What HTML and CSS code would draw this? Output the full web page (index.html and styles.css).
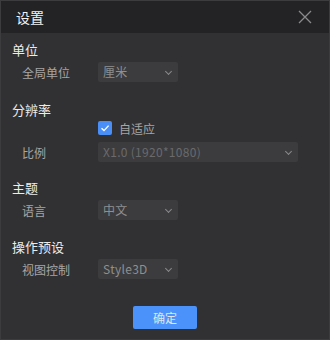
FILE: index.html
```html
<!DOCTYPE html>
<html lang="zh">
<head>
  <meta charset="UTF-8" />
  <title>设置</title>
  <link rel="stylesheet" href="styles.css">
</head>
<body>
  <div class="dialog">
    <div class="header">
      <span class="title">设置</span>
      <svg class="close" width="14" height="14" viewBox="0 0 14 14">
        <path d="M1 1 L13 13 M13 1 L1 13" stroke="#8a8a8c" stroke-width="1.3" fill="none"/>
      </svg>
    </div>

    <div class="content">
      <div class="section">
        <div class="section-title">单位</div>
        <div class="row">
          <span class="label">全局单位</span>
          <div class="select">厘米<span class="arrow"></span></div>
        </div>
      </div>

      <div class="section tight">
        <div class="section-title no-gap">分辨率</div>
        <div class="row">
          <span class="label"></span>
          <span class="checkbox">
            <svg width="14" height="14" viewBox="0 0 14 14">
              <path d="M3.5 7.2 L6 9.6 L10.6 4.6" stroke="#fff" stroke-width="1.4" fill="none"/>
            </svg>
          </span>
          <span class="check-label">自适应</span>
        </div>
        <div class="row">
          <span class="label">比例</span>
          <div class="select wide disabled">X1.0 (1920*1080)<span class="arrow"></span></div>
        </div>
      </div>

      <div class="section mid">
        <div class="section-title">主题</div>
        <div class="row">
          <span class="label">语言</span>
          <div class="select">中文<span class="arrow"></span></div>
        </div>
      </div>

      <div class="section">
        <div class="section-title">操作预设</div>
        <div class="row">
          <span class="label">视图控制</span>
          <div class="select">Style3D<span class="arrow"></span></div>
        </div>
      </div>
    </div>

    <div class="footer">
      <button class="ok">确定</button>
    </div>
  </div>
</body>
</html>
```

FILE: styles.css
```css
body {
  margin: 0;
  background: #313133;
  font-family: "Noto Sans CJK SC", "Noto Sans", sans-serif;
}

.dialog {
  width: 330px;
  height: 340px;
  box-sizing: border-box;
  border: 1px solid #3c3c3f;
  background: #313133;
  display: flex;
  flex-direction: column;
}

.header {
  height: 32px;
  background: #232325;
  display: flex;
  align-items: center;
  justify-content: space-between;
  padding: 0 17px 0 15px;
  flex-shrink: 0;
}

.title {
  color: #f2f2f2;
  font-size: 14px;
}

.content {
  padding: 9px 0 0 11px;
}

.section {
  margin-bottom: 20px;
}

.section.tight {
  margin-bottom: 18px;
}

.section.mid {
  margin-bottom: 19px;
}

.section-title {
  color: #ececec;
  font-size: 13px;
  line-height: 16px;
  margin-bottom: 4px;
}

.section-title.no-gap {
  margin-bottom: 0;
}

.row {
  display: flex;
  align-items: center;
  height: 20px;
  margin-bottom: 4px;
}

.row:last-child {
  margin-bottom: 0;
}

.label {
  width: 76px;
  padding-left: 10px;
  color: #a6a6a6;
  font-size: 12px;
}

.select {
  width: 80px;
  height: 20px;
  box-sizing: border-box;
  background: #3c3c3e;
  border-radius: 2px;
  color: #8f8f8f;
  font-size: 12px;
  letter-spacing: 0.3px;
  line-height: 20px;
  padding-left: 5px;
  position: relative;
}

.select.wide {
  width: 200px;
}

.select.disabled {
  color: #6a6a6c;
}

.arrow {
  position: absolute;
  right: 7px;
  top: 7px;
  width: 4px;
  height: 4px;
  border-right: 1px solid #8a8a8a;
  border-bottom: 1px solid #8a8a8a;
  transform: rotate(45deg);
}

.checkbox {
  width: 14px;
  height: 14px;
  background: #4a8ff7;
  border-radius: 2px;
  display: flex;
}

.check-label {
  margin-left: 7px;
  color: #a6a6a6;
  font-size: 12px;
}

.footer {
  margin-top: auto;
  display: flex;
  justify-content: center;
  padding-bottom: 10px;
}

.ok {
  width: 64px;
  height: 23px;
  border: none;
  border-radius: 2px;
  background: #4b93fa;
  color: #dfe6ee;
  font-family: inherit;
  font-size: 12px;
  padding: 0;
}
```
